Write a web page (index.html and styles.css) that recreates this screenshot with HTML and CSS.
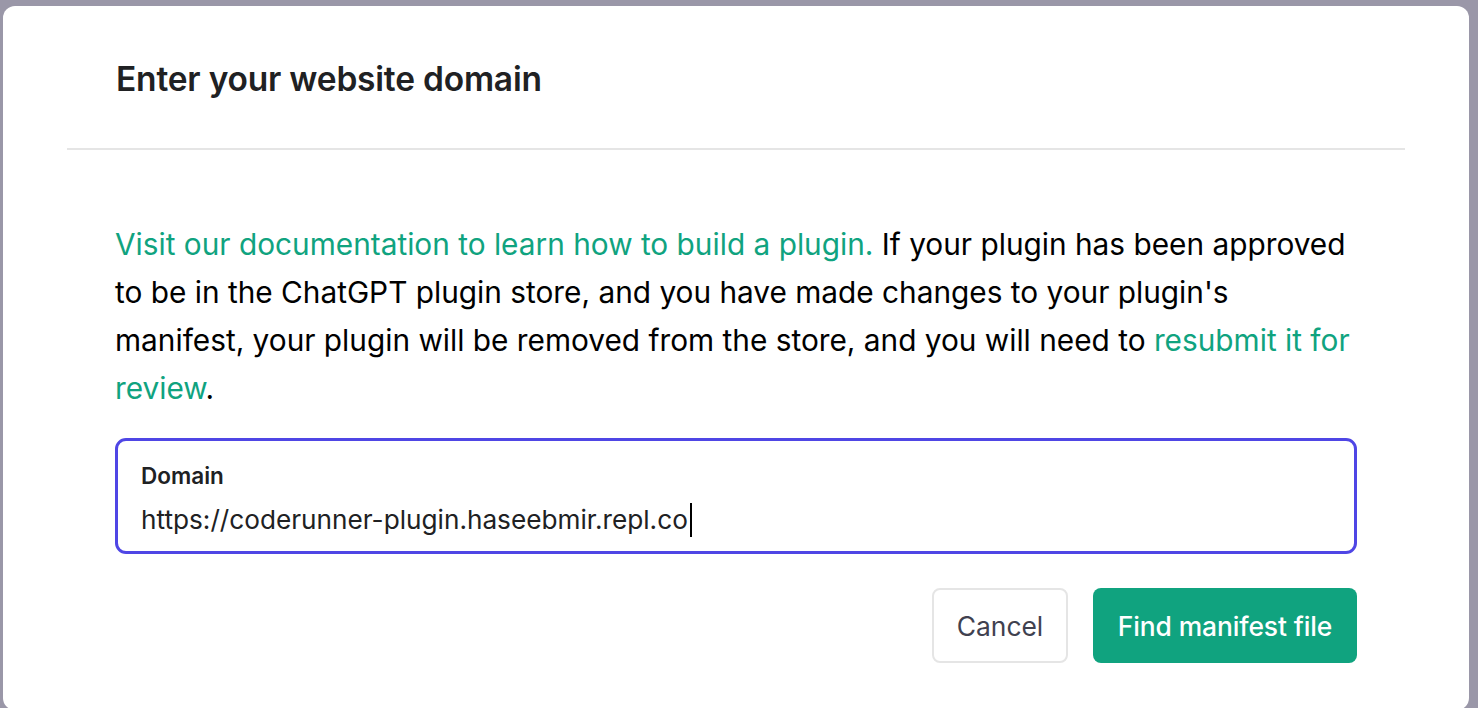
FILE: index.html
```html
<!DOCTYPE html>
<html>
<head>
<meta charset="utf-8">
<link rel="stylesheet" href="styles.css">
</head>
<body>
<div class="modal">
  <div class="modal-header">
    <h2 class="title">Enter your website domain</h2>
  </div>
  <div class="modal-body">
    <p class="desc"><a class="link" href="#">Visit our documentation to learn how to build a plugin.</a> If your plugin has been approved to be in the ChatGPT plugin store, and you have made changes to your plugin's manifest, your plugin will be removed from the store, and you will need to <a class="link" href="#">resubmit it for review</a>.</p>
    <div class="field">
      <div class="field-label">Domain</div>
      <div class="field-value">https://coderunner-plugin.haseebmir.repl.co<span class="caret"></span></div>
    </div>
    <div class="actions">
      <button class="btn btn-neutral">Cancel</button>
      <button class="btn btn-primary">Find manifest file</button>
    </div>
  </div>
</div>
</body>
</html>
```

FILE: styles.css
```css
html, body {
  margin: 0;
  padding: 0;
  height: 100%;
  overflow: hidden;
}
body {
  background: #9a97a8;
  padding: 6px 9px 0 3px;
  box-sizing: border-box;
  font-family: Inter, "Liberation Sans", sans-serif;
}
.modal {
  background: #ffffff;
  border-radius: 12px;
  height: 704px;
  box-sizing: border-box;
}
.modal-header {
  margin: 0 64px;
  padding: 3px 49px 0 49px;
  height: 144px;
  box-sizing: border-box;
  border-bottom: 2px solid #e5e5e5;
  display: flex;
  align-items: center;
}
.title {
  margin: 0;
  font-size: 33.5px;
  font-weight: 600;
  color: #202123;
  letter-spacing: -0.2px;
}
.modal-body {
  padding: 70px 112px 0 112px;
}
.desc {
  margin: 0;
  font-size: 29.8px;
  line-height: 48px;
  color: #000000;
}
.link {
  color: #10a37f;
  text-decoration: none;
}
.field {
  margin-top: 26px;
  border: 3px solid #4f46e5;
  border-radius: 11px;
  height: 116px;
  box-sizing: border-box;
  padding: 22px 23px 0 23px;
}
.field-label {
  font-size: 22.5px;
  font-weight: 600;
  color: #202123;
  line-height: 26px;
}
.field-value {
  margin-top: 14px;
  font-size: 26.2px;
  color: #202123;
  line-height: 30px;
  display: flex;
  align-items: center;
}
.caret {
  display: inline-block;
  width: 2px;
  height: 34px;
  background: #000;
  margin-left: 2px;
}
.actions {
  margin-top: 34px;
  display: flex;
  justify-content: flex-end;
  gap: 25px;
}
.btn {
  height: 75px;
  border-radius: 8px;
  font-family: inherit;
  font-size: 26.4px;
  padding: 0;
  box-sizing: border-box;
  white-space: nowrap;
}
.btn-neutral {
  background: #fff;
  border: 2px solid #e5e5e5;
  color: #40414f;
  width: 136px;
}
.btn-primary {
  background: #10a37f;
  border: none;
  color: #fff;
  font-weight: 500;
  width: 264px;
  letter-spacing: -0.1px;
}
```
